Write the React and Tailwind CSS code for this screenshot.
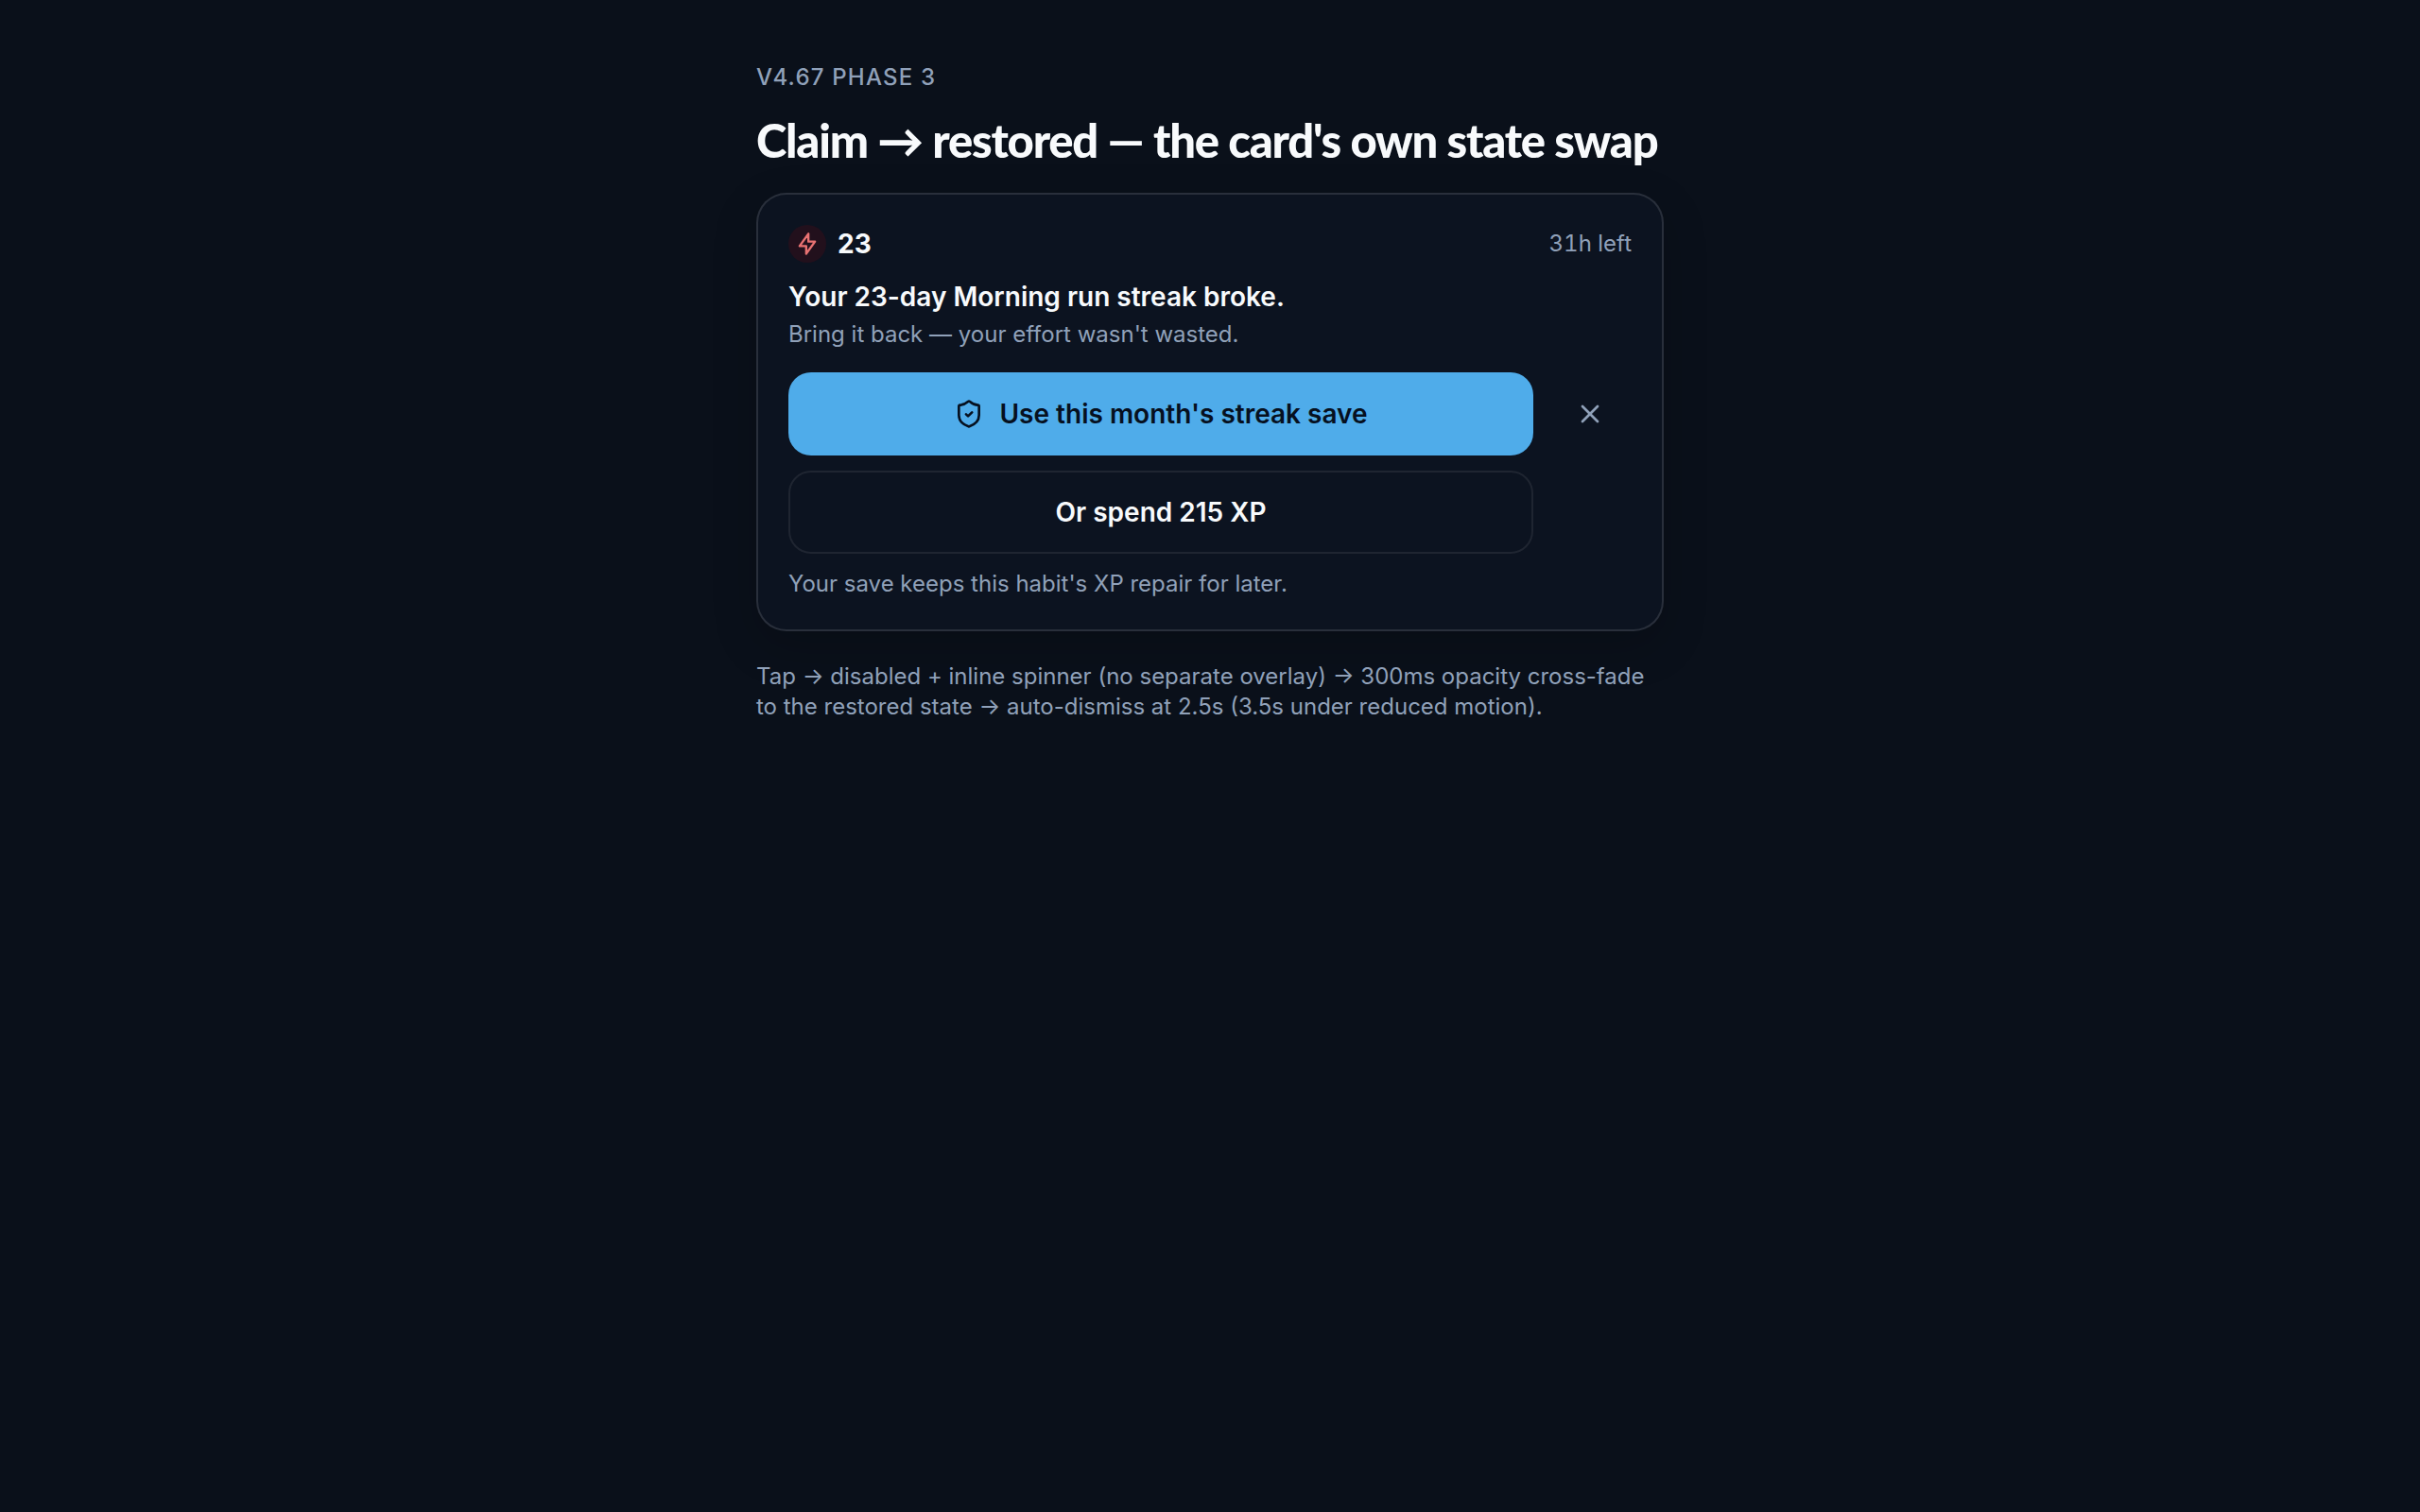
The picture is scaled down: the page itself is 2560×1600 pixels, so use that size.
import { X } from "lucide-react";

function LineIcon({ className, children }) {
  return (
    <svg
      viewBox="0 0 24 24"
      fill="none"
      stroke="currentColor"
      strokeWidth="2"
      strokeLinecap="round"
      strokeLinejoin="round"
      aria-hidden="true"
      className={className}
    >
      {children}
    </svg>
  );
}

function BoltIcon({ className }) {
  return (
    <LineIcon className={className}>
      <path d="M13 3v7h6l-8 11v-7H5l8-11" />
    </LineIcon>
  );
}

function ShieldCheckIcon({ className }) {
  return (
    <LineIcon className={className}>
      <path d="M20 13c0 5-3.5 7.5-7.66 8.95a1 1 0 0 1-.67-.01C7.5 20.5 4 18 4 13V6a1 1 0 0 1 1-1c2 0 4.5-1.2 6.24-2.72a1.17 1.17 0 0 1 1.52 0C14.51 3.81 17 5 19 5a1 1 0 0 1 1 1z" />
      <path d="m9.7 12.3 1.6 1.5 3.1-3" />
    </LineIcon>
  );
}

function StreakCard() {
  return (
    <section className="rounded-[32px] border-2 border-white/12 bg-[#0c1320] p-8 shadow-[0_16px_48px_rgba(0,0,0,0.18)]">
      <div className="flex items-center gap-3">
        <span className="flex size-10 items-center justify-center rounded-full bg-[#22101c] text-[#e87272]">
          <BoltIcon className="size-7" />
        </span>
        <span className="text-[28px] leading-10 font-bold">23</span>
        <span className="ml-auto text-2xl text-slate-400 tabular-nums">31h left</span>
      </div>
      <h2 className="mt-4 text-[28px] leading-10 font-semibold">Your 23-day Morning run streak broke.</h2>
      <p className="mt-1 text-2xl text-slate-400">Bring it back — your effort wasn't wasted.</p>
      <div className="mt-6 flex items-start gap-4">
        <div className="flex flex-1 flex-col gap-4">
          <button
            type="button"
            className="flex h-22 items-center justify-center gap-4 rounded-3xl bg-[#4facea] text-[28px] leading-10 font-semibold text-[#06101f]"
          >
            <ShieldCheckIcon className="size-8" />
            Use this month's streak save
          </button>
          <button
            type="button"
            className="flex h-22 items-center justify-center rounded-3xl border-2 border-white/8 text-[28px] leading-10 font-semibold"
          >
            Or spend 215 XP
          </button>
        </div>
        <button type="button" aria-label="Dismiss" className="flex size-22 items-center justify-center text-slate-400">
          <X className="size-8" strokeWidth={2} aria-hidden="true" />
        </button>
      </div>
      <p className="mt-4 text-2xl text-slate-400">Your save keeps this habit's XP repair for later.</p>
    </section>
  );
}

export default function App() {
  return (
    <main className="min-h-screen bg-[#0a101a] pt-16 font-['Inter',sans-serif] text-slate-50">
      <div className="mx-auto max-w-[960px]">
        <p className="text-2xl leading-9 font-medium tracking-wider text-slate-400 uppercase">v4.67 Phase 3</p>
        <h1 className="mt-3 mb-5 font-['Lato','Inter',sans-serif] text-[49px] leading-18 font-black tracking-tight">
          Claim → restored — the card's own state swap
        </h1>
        <StreakCard />
        <p className="mt-8 text-2xl text-slate-400">
          Tap → disabled + inline spinner (no separate overlay) → 300ms opacity cross-fade to the restored state →
          auto-dismiss at 2.5s (3.5s under reduced motion).
        </p>
      </div>
    </main>
  );
}
